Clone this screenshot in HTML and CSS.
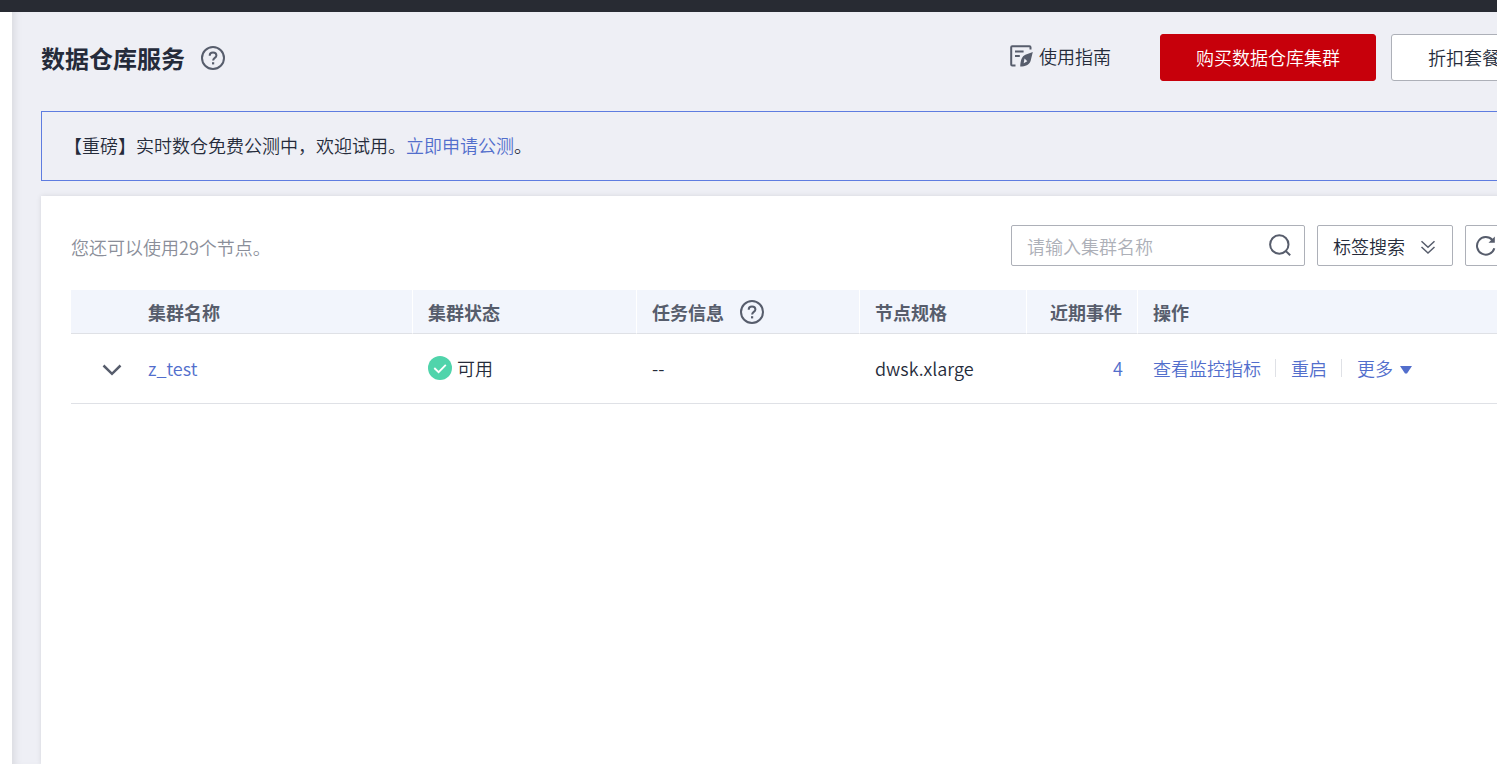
FILE: index.html
```html
<!DOCTYPE html>
<html lang="zh-CN">
<head>
<meta charset="UTF-8">
<meta name="viewport" content="width=device-width, initial-scale=1.0">
<title>数据仓库服务</title>
<link rel="stylesheet" href="styles.css">
</head>
<body>
<div class="topbar"></div>
<main class="console">
<header class="page-header">
<h1>数据仓库服务</h1>
<button type="button" class="icon-btn" aria-label="帮助">
<svg class="icon-help" width="24" height="24" viewBox="0 0 24 24">
<circle cx="12" cy="12" r="11"/>
<path d="M8.700 9.700C8.700 7.700 10 6.500 12 6.500s3.400 1.200 3.400 2.900c0 2.400-3.300 2.500-3.300 5"/>
<path class="dot" d="M11 16.200h2.200v2.200H11z"/>
</svg>
</button>
<a class="guide" href="#">
<svg width="24" height="24" viewBox="0 0 24 24">
<path class="line" d="M6.500 21.500H3.200q-1 0-1-1V3.200q0-1 1-1h17.300q1 0 1 1v2.400M6 7.600h8.600M6 12h4.800"/>
<path class="pen" fill-rule="evenodd" d="M23.800 8 16.400 10.800c-3.500 1.600-4.900 5.200-5.200 11.800 5.500-.2 8.800-1.500 10.400-5.600zM15.500 14.500l2.800 2.800-3.600 2z"/>
</svg>
使用指南
</a>
<button type="button" class="btn btn-buy">购买数据仓库集群</button>
<button type="button" class="btn">折扣套餐</button>
</header>
<div class="notice">【重磅】实时数仓免费公测中，欢迎试用。<a href="#">立即申请公测</a>。</div>
<section class="card">
<div class="toolbar">
<p class="quota">您还可以使用29个节点。</p>
<form class="search">
<input type="text" aria-label="集群名称" placeholder="请输入集群名称">
<button type="submit" class="icon-btn" aria-label="搜索">
<svg class="icon-line" width="24" height="24" viewBox="0 0 24 24">
<circle cx="11.300" cy="10.500" r="9.200"/>
<path d="M17.600 16.900l4.600 4.400"/>
</svg>
</button>
</form>
<button type="button" class="tool-btn">标签搜索
<svg class="icon-line" width="16" height="18" viewBox="0 0 16 18">
<path d="M1.500 4.300 8 10.300l6.500-6M1.500 10 8 16l6.500-6"/>
</svg>
</button>
<button type="button" class="tool-btn tool-refresh" aria-label="刷新">
<svg class="icon-line" width="22" height="22" viewBox="0 0 22 22">
<path d="M19.300 13.200A8.800 8.800 0 1 1 17.400 5"/>
<path class="tip" d="M19.800 1.500v6.300h-6.300z"/>
</svg>
</button>
</div>
<table>
<colgroup>
<col class="col-expand">
<col class="col-name">
<col class="col-status">
<col class="col-task">
<col class="col-flavor">
<col class="col-event">
<col>
</colgroup>
<thead>
<tr>
<th class="expand"></th>
<th>集群名称</th>
<th>集群状态</th>
<th>
<div class="cell">任务信息
<button type="button" class="icon-btn" aria-label="任务信息说明">
<svg class="icon-help" width="24" height="24" viewBox="0 0 24 24">
<circle cx="12" cy="12" r="11"/>
<path d="M8.700 9.700C8.700 7.700 10 6.500 12 6.500s3.400 1.200 3.400 2.900c0 2.400-3.300 2.500-3.300 5"/>
<path class="dot" d="M11 16.200h2.200v2.200H11z"/>
</svg>
</button>
</div>
</th>
<th>节点规格</th>
<th class="num">近期事件</th>
<th>操作</th>
</tr>
</thead>
<tbody>
<tr>
<td class="expand">
<button type="button" class="icon-btn" aria-label="展开">
<svg class="icon-arrow" width="20" height="12" viewBox="0 0 20 12">
<path d="M1.500 1.500 10 9.800l8.500-8.300"/>
</svg>
</button>
</td>
<td><a href="#">z_test</a></td>
<td>
<div class="cell status">
<svg width="24" height="24" viewBox="0 0 24 24">
<circle cx="12" cy="12" r="12" fill="#50d4ab"/>
<path d="M6.300 12l4.300 4.200 7.200-7.400" fill="none" stroke="#fff" stroke-width="1.800"/>
</svg>
可用
</div>
</td>
<td>--</td>
<td>dwsk.xlarge</td>
<td class="num"><a href="#">4</a></td>
<td>
<div class="cell actions">
<a href="#">查看监控指标</a>
<a href="#">重启</a>
<a href="#" class="more">更多
<svg width="12" height="12" viewBox="0 0 12 12"><path d="M0 4h12L7 11.500H5z" fill="#526ecc"/></svg>
</a>
</div>
</td>
</tr>
</tbody>
</table>
</section>
</main>
</body>
</html>
```

FILE: styles.css
```css
* {
margin: 0;
padding: 0;
box-sizing: border-box;
}
body {
display: flex;
flex-direction: column;
min-height: 100vh;
overflow-x: hidden;
background: #fff;
color: #252b3a;
font-family: "Noto Sans CJK SC", "Noto Sans", sans-serif;
font-size: 18px;
font-weight: 350;
line-height: 24px;
}
a {
color: #526ecc;
text-decoration: none;
}
button,
input {
font: inherit;
color: inherit;
}
button {
cursor: pointer;
}
svg {
display: block;
flex: none;
}
.topbar {
height: 12px;
background: #282b33;
}
/* The console is wider than the window, its right edge is cut off */
.console {
flex: 1;
display: flex;
flex-direction: column;
width: calc(100% + 28px);
margin-left: 12px;
padding-left: 29px;
background: #eeeff5;
box-shadow: inset 8px 0 8px -6px rgba(0, 0, 0, 0.1);
}
.page-header {
display: flex;
align-items: center;
padding: 22px 0 30px;
}
.page-header h1 {
margin-right: 16px;
font-size: 24px;
font-weight: 700;
line-height: 36px;
}
.icon-btn {
border: none;
background: none;
}
.icon-help {
fill: none;
stroke: #575d6c;
stroke-width: 2;
}
.icon-help .dot {
fill: #575d6c;
stroke: none;
}
.guide {
display: flex;
align-items: center;
gap: 6px;
margin-left: auto;
margin-right: 49px;
padding-bottom: 4px;
color: #252b3a;
}
.guide .line {
fill: none;
stroke: #575d6c;
stroke-width: 2;
}
.guide .pen {
fill: #575d6c;
}
.btn {
height: 47px;
padding: 0 36px 2px;
border: 1px solid #adb0b8;
border-radius: 3px;
background: #fff;
}
.btn-buy {
margin-right: 15px;
padding: 0 35px 2px;
border-color: #c7000b;
background: #c7000b;
color: #fff;
}
.notice {
padding: 21px 22px 23px;
border: 1px solid #5e7ce0;
}
.card {
flex: 1;
margin-top: 15px;
padding: 29px 30px;
background: #fff;
box-shadow: 0 0 5px rgba(0, 0, 0, 0.1);
}
.toolbar {
display: flex;
align-items: center;
gap: 12px;
margin-bottom: 24px;
}
.quota {
margin-right: auto;
padding-top: 3px;
color: #8a8e99;
}
.search {
display: flex;
align-items: center;
width: 294px;
height: 41px;
padding: 0 12px 0 15px;
border: 1px solid #adb0b8;
border-radius: 2px;
}
.search input {
flex: 1;
min-width: 0;
border: none;
outline: none;
background: none;
}
.search input::placeholder {
color: #adb0b8;
}
.icon-line {
fill: none;
stroke: #575d6c;
stroke-width: 2;
}
.icon-line .tip {
fill: #575d6c;
stroke: none;
}
.tool-btn {
display: flex;
align-items: center;
gap: 15px;
height: 41px;
padding: 0 16px 0 15px;
border: 1px solid #adb0b8;
border-radius: 2px;
background: #fff;
}
.tool-btn .icon-line {
stroke-width: 1.5;
}
.tool-refresh {
padding: 0 9px;
}
.tool-refresh .icon-line {
stroke-width: 2;
}
table {
width: 100%;
table-layout: fixed;
border-collapse: separate;
border-spacing: 0;
}
.col-expand {
width: 62px;
}
.col-name {
width: 280px;
}
.col-status {
width: 224px;
}
.col-task {
width: 223px;
}
.col-flavor {
width: 167px;
}
.col-event {
width: 111px;
}
th,
td {
padding: 0 15px;
border-bottom: 1px solid #dfe1e6;
text-align: left;
}
th {
height: 44px;
border-right: 1px solid #fff;
background: #f2f5fc;
color: #575d6c;
font-weight: 700;
}
th.expand {
border-right: none;
}
td {
height: 70px;
padding-bottom: 2px;
}
.num {
text-align: right;
}
td.expand {
padding: 0 0 2px 31px;
}
.icon-arrow {
fill: none;
stroke: #575d6c;
stroke-width: 2.5;
}
.cell {
display: flex;
align-items: center;
gap: 16px;
}
.status {
gap: 5px;
}
.actions {
gap: 0;
}
.actions a + a {
display: flex;
align-items: center;
gap: 7px;
height: 18px;
margin-left: 14px;
padding-left: 15px;
border-left: 1px solid #dfe1e6;
}
```
